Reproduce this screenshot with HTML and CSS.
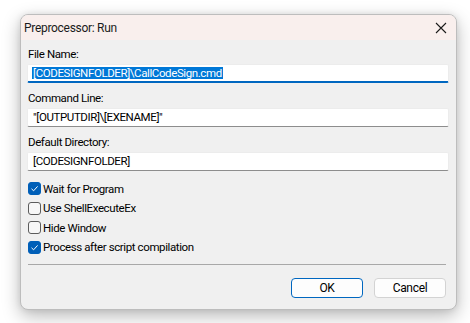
FILE: index.html
```html
<!DOCTYPE html>
<html lang="en">
<head>
    <meta charset="UTF-8">
    <title>Preprocessor: Run</title>
    <link rel="stylesheet" href="styles.css">
</head>
<body>
    <div class="window">
        <div class="titlebar">
            <span class="title">Preprocessor: Run</span>
            <svg class="close" width="12" height="12" viewBox="0 0 12 12">
                <path d="M1 1 L11 11 M11 1 L1 11" stroke="#1b1b1b" stroke-width="1.1" fill="none"/>
            </svg>
        </div>
        <div class="content">
            <div class="field">
                <div class="label">File Name:</div>
                <div class="input focused"><span class="sel">[CODESIGNFOLDER]\CallCodeSign.cmd</span></div>
            </div>
            <div class="field">
                <div class="label">Command Line:</div>
                <div class="input">"[OUTPUTDIR]\[EXENAME]"</div>
            </div>
            <div class="field">
                <div class="label">Default Directory:</div>
                <div class="input">[CODESIGNFOLDER]</div>
            </div>
            <div class="checks">
                <div class="check"><span class="box on"><svg width="13" height="13" viewBox="0 0 13 13"><path d="M3.5 6.8 L5.6 8.8 L9.6 4.4" stroke="#fff" stroke-width="1" fill="none"/></svg></span>Wait for Program</div>
                <div class="check"><span class="box"></span>Use ShellExecuteEx</div>
                <div class="check"><span class="box"></span>Hide Window</div>
                <div class="check"><span class="box on"><svg width="13" height="13" viewBox="0 0 13 13"><path d="M3.5 6.8 L5.6 8.8 L9.6 4.4" stroke="#fff" stroke-width="1" fill="none"/></svg></span>Process after script compilation</div>
            </div>
            <div class="sep"></div>
            <div class="buttons">
                <button class="btn default">OK</button>
                <button class="btn">Cancel</button>
            </div>
        </div>
    </div>
</body>
</html>
```

FILE: styles.css
```css
*{
    margin: 0;
    padding: 0;
    box-sizing: border-box;
}
body{
    background-color: #ffffff;
    font-family: Roboto, "Noto Sans", sans-serif;
    font-size: 11.5px;
    letter-spacing: -0.4px;
    color: #000;
    width: 470px;
    height: 323px;
    overflow: hidden;
}
.window{
    margin: 14px 0 0 20px;
    width: 437px;
    height: 296px;
    background-color: #f0f0f0;
    border: 1px solid #bdbdbd;
    border-radius: 8px;
    overflow: hidden;
    box-shadow: 0 6px 18px rgba(0, 0, 0, 0.28), 0 0 6px rgba(0, 0, 0, 0.08);
}
.titlebar{
    height: 25px;
    background-color: #f9efed;
    display: flex;
    align-items: center;
    justify-content: space-between;
    padding: 0 9px 0 3px;
}
.title{
    color: #1b1b1b;
    font-size: 12px;
    letter-spacing: -0.3px;
}
.content{
    padding: 6px 7px 0 6px;
}
.field{
    margin-bottom: 7px;
}
.label{
    line-height: 16px;
    padding-left: 1px;
    margin-bottom: 2px;
}
.input{
    height: 19px;
    background-color: #fff;
    border: 1px solid #ececec;
    border-bottom-color: #8d8d8d;
    border-radius: 2px;
    padding-left: 5px;
    line-height: 17px;
    white-space: nowrap;
}
.input.focused{
    border-bottom: 2px solid #0067c0;
    padding-left: 4px;
    line-height: 16px;
}
.sel{
    background-color: #0078d7;
    color: #fff;
    display: inline-block;
    line-height: 12px;
    padding: 0 1px;
}
.checks{
    margin-top: 8px;
    padding-left: 1px;
}
.check{
    height: 19.5px;
    display: flex;
    align-items: center;
}
.box{
    width: 13px;
    height: 13px;
    border: 1px solid #5c5c5c;
    border-radius: 3px;
    background-color: #f7f7f7;
    margin-right: 2px;
    display: flex;
}
.box.on{
    background-color: #005fb8;
    border-color: #005fb8;
}
.box svg{
    margin: -1px;
}
.sep{
    margin: 7px 3px 0 1px;
    height: 1px;
    background-color: #a8a8a8;
}
.buttons{
    display: flex;
    justify-content: flex-end;
    gap: 11px;
    padding: 13px 3px 0 0;
}
.btn{
    width: 72px;
    height: 20px;
    background-color: #fdfdfd;
    border: 1px solid #d3d3d3;
    border-radius: 4px;
    font-family: inherit;
    font-size: 12px;
    letter-spacing: -0.3px;
    color: #000;
}
.btn.default{
    border-color: #0067c0;
}
```
